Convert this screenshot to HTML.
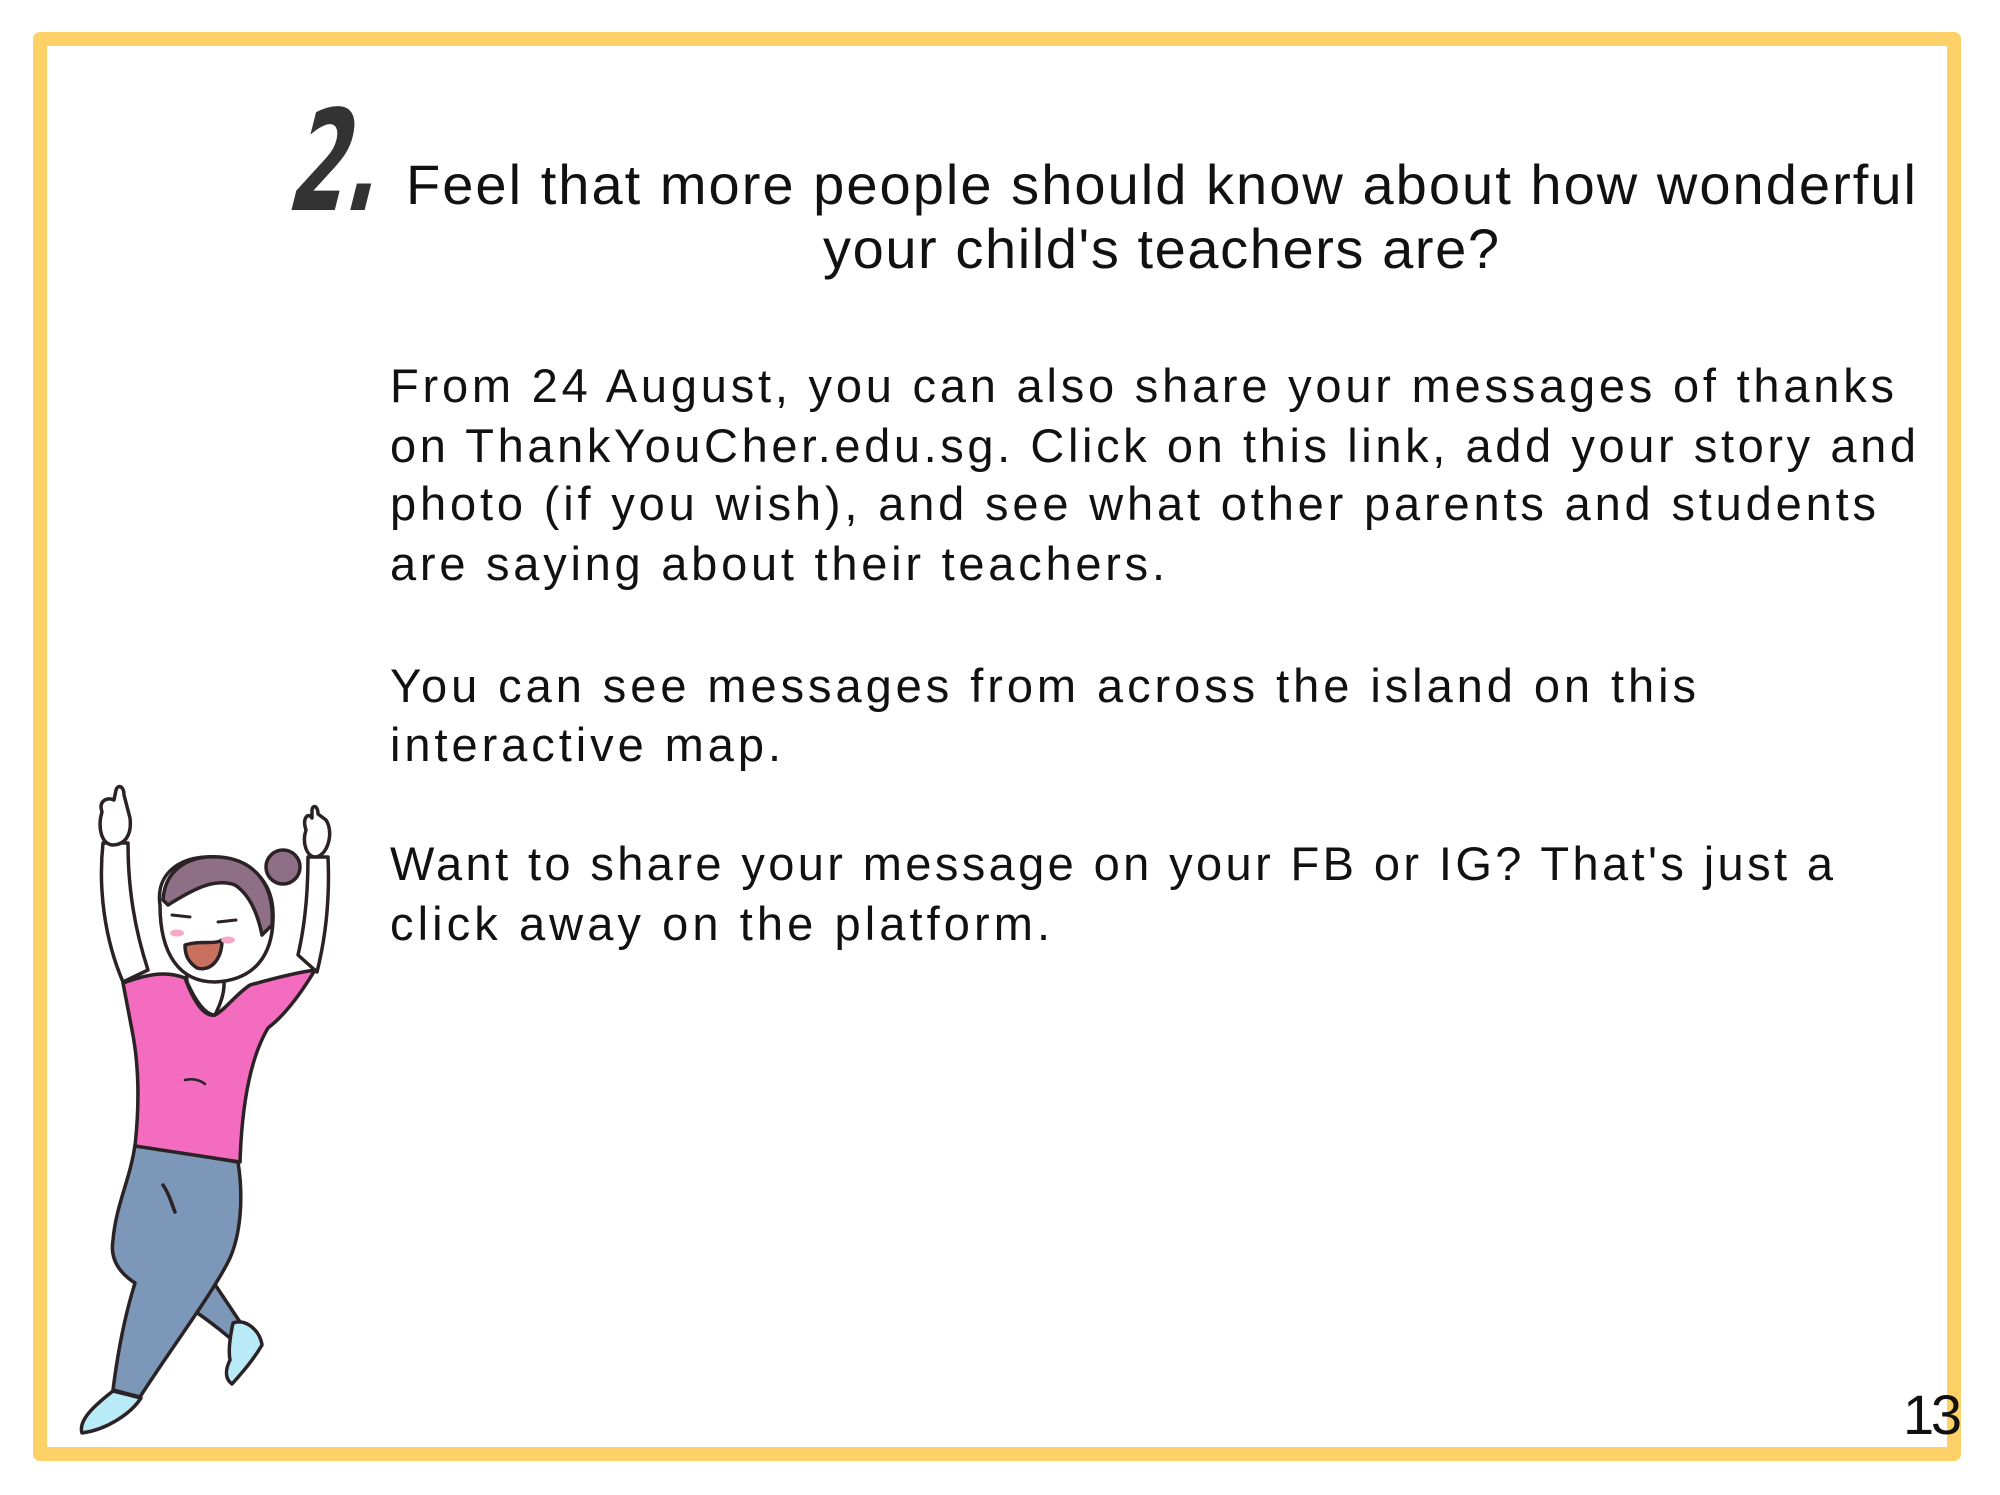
<!DOCTYPE html>
<html><head><meta charset="utf-8"><style>
html,body{margin:0;padding:0;background:#fff;}
svg{display:block}
text{font-family:"Liberation Sans",sans-serif;fill:#111}
</style></head><body>
<svg width="2000" height="1495" viewBox="0 0 2000 1495" xmlns="http://www.w3.org/2000/svg">
<rect x="0" y="0" width="2000" height="1495" fill="#fff"/>
<rect x="40" y="39" width="1914" height="1415" fill="none" stroke="#fdd168" stroke-width="14" stroke-linejoin="round"/>

<text x="0" y="0" font-size="140" font-weight="bold" textLength="88" lengthAdjust="spacingAndGlyphs" transform="translate(285,210) skewX(-14)" style="font-family:'DejaVu Sans',sans-serif;fill:#333">2.</text>

<text x="406" y="204" font-size="56" textLength="1510" lengthAdjust="spacing">Feel that more people should know about how wonderful</text>
<text x="823" y="268" font-size="56" textLength="676" lengthAdjust="spacing">your child's teachers are?</text>

<g font-size="47">
<text x="390" y="402" textLength="1504" lengthAdjust="spacing">From 24 August, you can also share your messages of thanks</text>
<text x="390" y="462" textLength="1526" lengthAdjust="spacing">on ThankYouCher.edu.sg. Click on this link, add your story and</text>
<text x="390" y="520" textLength="1486" lengthAdjust="spacing">photo (if you wish), and see what other parents and students</text>
<text x="390" y="580" textLength="775" lengthAdjust="spacing">are saying about their teachers.</text>
<text x="390" y="702" textLength="1306" lengthAdjust="spacing">You can see messages from across the island on this</text>
<text x="390" y="761" textLength="391" lengthAdjust="spacing">interactive map.</text>
<text x="390" y="880" textLength="1443" lengthAdjust="spacing">Want to share your message on your FB or IG? That's just a</text>
<text x="390" y="940" textLength="660" lengthAdjust="spacing">click away on the platform.</text>
</g>
<text x="1903" y="1434" font-size="56" textLength="59" lengthAdjust="spacing">13</text>

<!-- figure -->
<g stroke="#2a2224" stroke-width="3.5" stroke-linejoin="round" stroke-linecap="round">
  <path d="M103 843 C98 890 105 940 123 982 L148 970 C135 930 128 890 128 843 Z" fill="#fff"/>
  <path d="M328 857 C330 900 325 940 317 972 L298 955 C305 925 308 890 308 857 Z" fill="#fff"/>
  <path d="M102 812 C98 800 108 797 114 800 L116 790 C118 784 124 786 124 795 L130 818 C132 835 125 845 112 845 C100 843 98 825 102 812 Z" fill="#fff"/>
  <path d="M306 830 C302 818 308 812 312 818 L312 810 C313 804 318 806 318 814 L326 820 C334 832 328 855 316 857 C306 857 302 842 306 830 Z" fill="#fff"/>
  <path d="M198 1285 L212 1280 L240 1322 L230 1338 C218 1328 205 1318 193 1310 Z" fill="#7d97b8"/>
  <path d="M135 1145 L238 1162 C244 1200 240 1235 230 1258 C215 1290 170 1350 140 1397 L113 1390 C118 1350 125 1315 135 1283 C118 1272 110 1258 113 1240 C116 1205 130 1180 135 1145 Z" fill="#7d97b8"/>
  <path d="M163 1185 C170 1195 172 1205 175 1212" fill="none"/>
  <path d="M113 1391 L141 1398 C130 1415 105 1430 82 1433 C78 1420 95 1405 113 1391 Z" fill="#b8ebf7"/>
  <path d="M233 1323 C245 1318 260 1330 262 1345 C252 1362 240 1375 232 1384 C224 1378 226 1368 230 1360 C228 1350 230 1337 233 1323 Z" fill="#b8ebf7"/>
  <path d="M123 983 C145 975 165 970 185 978 C195 1005 205 1017 215 1015 C225 1010 235 995 250 985 C275 978 300 972 315 970 C300 995 285 1015 268 1028 C252 1055 242 1100 240 1162 L135 1146 C140 1100 138 1060 132 1030 Z" fill="#f36cbf"/>
  <path d="M185 1080 C192 1078 200 1080 205 1084" fill="none" stroke-width="2.5"/>
  <path d="M186 960 L187 982 C195 1000 205 1015 215 1015 C220 1005 224 995 224 985 L225 960 Z" fill="#fff"/>
  <circle cx="283" cy="867" r="17" fill="#8e6f86"/>
  <path d="M160 905 C155 870 185 855 215 857 C250 860 275 880 273 920 C272 955 255 980 215 982 C180 982 160 955 160 905 Z" fill="#fff"/>
  <path d="M163 900 C165 868 190 855 220 857 C255 860 275 885 272 925 L262 935 C258 915 250 895 235 885 C215 878 195 888 168 905 Z" fill="#8e6f86"/>
  <path d="M185 945 C200 940 215 945 222 940 C222 960 210 972 197 968 C188 962 185 955 185 945 Z" fill="#c9705f"/>
  <path d="M172 915 L190 917 M218 922 L236 920" fill="none" stroke-width="3"/>
</g>
<ellipse cx="177" cy="933" rx="7" ry="3.5" fill="#f7a8c8"/>
<ellipse cx="228" cy="940" rx="7" ry="3.5" fill="#f7a8c8"/>
</svg>
</body></html>
